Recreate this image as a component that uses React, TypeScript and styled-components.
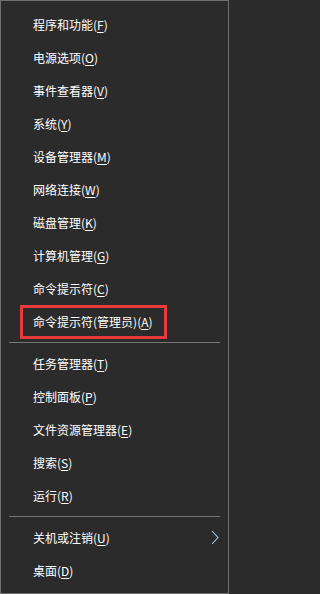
import React from "react";
import styled, { createGlobalStyle } from "styled-components";

const GlobalStyle = createGlobalStyle`
  html, body {
    margin: 0;
    padding: 0;
    background: #2b2b2b;
  }
`

type Entry = { label: string; key: string; marked?: boolean; sub?: boolean } | "sep";

const entries: Entry[] = [
    { label: "程序和功能", key: "F" },
    { label: "电源选项", key: "O" },
    { label: "事件查看器", key: "V" },
    { label: "系统", key: "Y" },
    { label: "设备管理器", key: "M" },
    { label: "网络连接", key: "W" },
    { label: "磁盘管理", key: "K" },
    { label: "计算机管理", key: "G" },
    { label: "命令提示符", key: "C" },
    { label: "命令提示符(管理员)", key: "A", marked: true },
    "sep",
    { label: "任务管理器", key: "T" },
    { label: "控制面板", key: "P" },
    { label: "文件资源管理器", key: "E" },
    { label: "搜索", key: "S" },
    { label: "运行", key: "R" },
    "sep",
    { label: "关机或注销", key: "U", sub: true },
    { label: "桌面", key: "D" },
];

const Chevron = () => (
    <svg width="8" height="15" viewBox="0 0 8 15">
        <polyline points="1,1 7,7.5 1,14" fill="none" stroke="#a9cbef" strokeWidth="1.1"/>
    </svg>
);

export default function App() {
    return (
        <>
            <GlobalStyle/>
            <Menu>
                {entries.map((e, i) =>
                    e === "sep" ? (
                        <Separator key={i}/>
                    ) : (
                        <Item key={i}>
                            <Label $marked={e.marked}>
                                {e.label}(<Key>{e.key}</Key>)
                            </Label>
                            {e.sub && <Arrow><Chevron/></Arrow>}
                        </Item>
                    )
                )}
            </Menu>
        </>
    );
}

const Menu = styled.div`
  width: 229px;
  height: 594px;
  box-sizing: border-box;
  background: #2b2b2b;
  border: 1px solid #6f6f6f;
  padding: 7px 0 6px 0;
  display: flex;
  flex-direction: column;
  font-family: "Noto Sans CJK SC", "Noto Sans", sans-serif;
  font-size: 12px;
  color: #ffffff;
`
const Item = styled.div`
  height: 33px;
  flex: none;
  display: flex;
  align-items: center;
  padding-left: 32px;
  padding-right: 9px;
  box-sizing: border-box;
  white-space: nowrap;
`
const Label = styled.span<{ $marked?: boolean }>`
  display: inline-flex;
  align-items: center;
  line-height: 16px;
  ${p => p.$marked && `
    height: 34px;
    box-sizing: border-box;
    border: 3px solid #e93a3b;
    padding: 0 11px 0 10px;
    margin-left: -13px;
  `}
`
const Key = styled.span`
  text-decoration: underline;
  text-underline-offset: 2px;
`
const Arrow = styled.span`
  margin-left: auto;
  display: flex;
  align-items: center;
  margin-right: 0;
`
const Separator = styled.div`
  height: 9px;
  flex: none;
  display: flex;
  align-items: flex-start;
  padding: 4px 8px 0 8px;
  box-sizing: border-box;

  &::after {
    content: "";
    flex: 1;
    height: 1px;
    background: #767676;
  }
`
